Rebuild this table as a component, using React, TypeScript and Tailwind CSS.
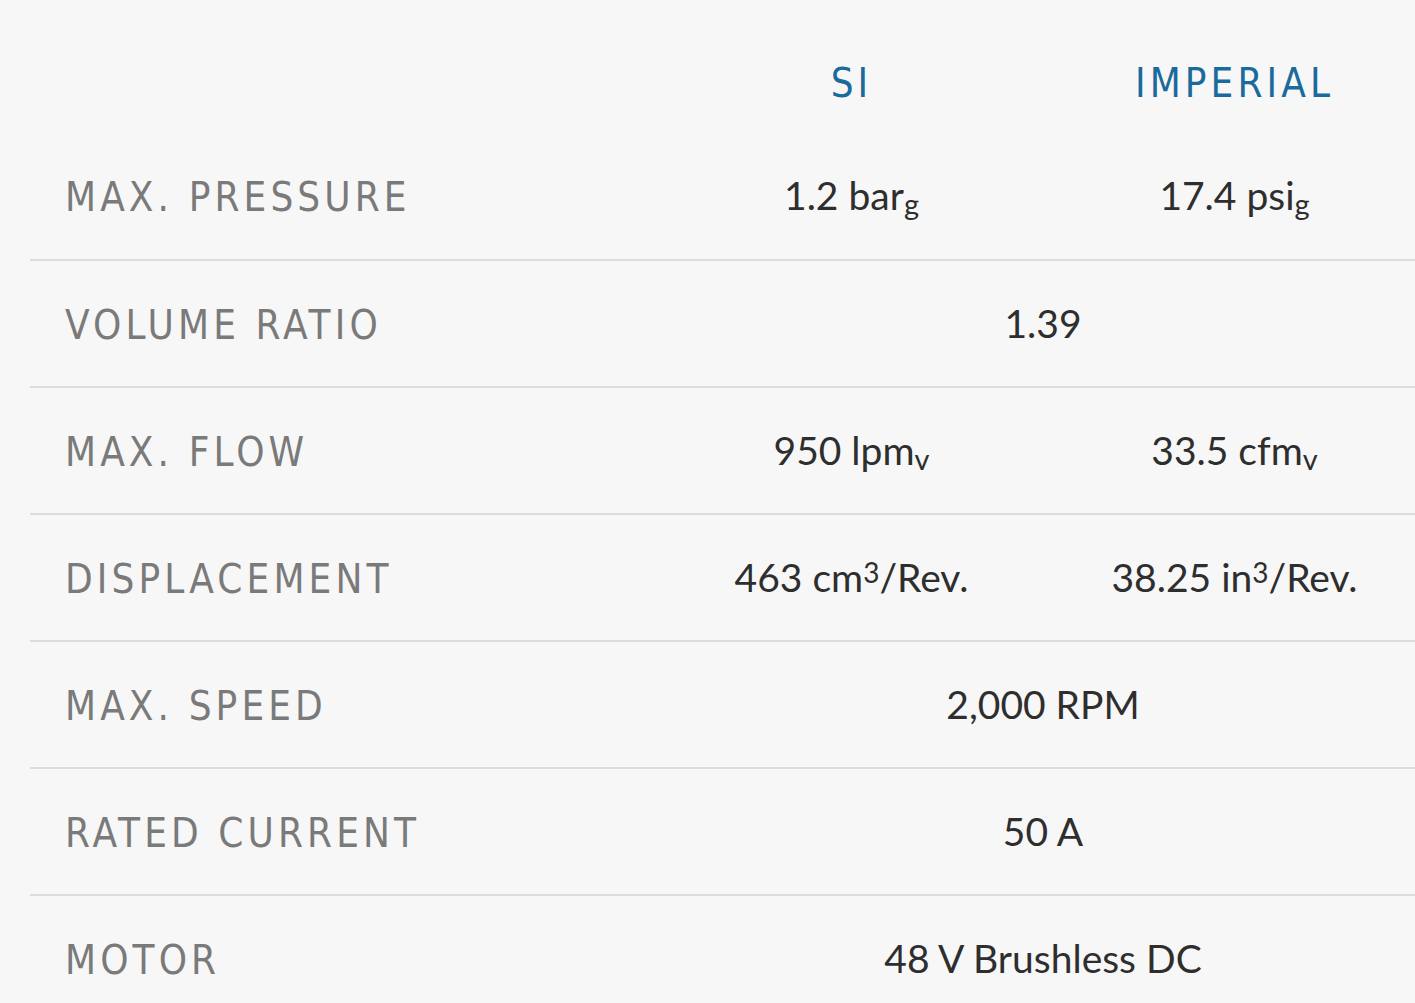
import React from 'react';

type Row = {
  label: string;
  si?: React.ReactNode;
  imperial?: React.ReactNode;
  both?: React.ReactNode;
};

// spans instead of <sub>/<sup> so the browser's sub/sup rules don't shrink the glyphs
const Sub = ({ children }: { children: React.ReactNode }) => (
  <span className="relative top-[5px] text-[29px] leading-[0]">{children}</span>
);

const Sup = ({ children }: { children: React.ReactNode }) => (
  <span className="relative -top-[9px] text-[28px] leading-[0]">{children}</span>
);

const rows: Row[] = [
  { label: 'MAX. PRESSURE', si: <>1.2 bar<Sub>g</Sub></>, imperial: <>17.4 psi<Sub>g</Sub></> },
  { label: 'VOLUME RATIO', both: '1.39' },
  { label: 'MAX. FLOW', si: <>950 lpm<Sub>v</Sub></>, imperial: <>33.5 cfm<Sub>v</Sub></> },
  { label: 'DISPLACEMENT', si: <>463 cm<Sup>3</Sup>/Rev.</>, imperial: <>38.25 in<Sup>3</Sup>/Rev.</> },
  { label: 'MAX. SPEED', both: '2,000 RPM' },
  { label: 'RATED CURRENT', both: '50 A' },
  { label: 'MOTOR', both: '48 V Brushless DC' },
];

const labelFont = "font-['DejaVu_Sans',sans-serif] [font-stretch:condensed] text-[40px] leading-[48px] tracking-[4.1px]";
const valueFont = "font-['Lato',sans-serif] text-center text-[39px] leading-[48px] pb-[5px] text-[#2e2e2e]";

export default function App() {
  return (
    <div className="w-full h-[1003px] overflow-hidden bg-[#f7f7f7]">
      <div className="ml-[30px] w-[1396px]">
        <div className="grid grid-cols-[630px_383px_383px] h-[132px] items-start pt-[59px]">
          <div />
          <div className={`${labelFont} text-center text-[#1a6a9c]`}>SI</div>
          <div className={`${labelFont} text-center text-[#1a6a9c]`}>IMPERIAL</div>
        </div>
        {rows.map((row, i) => (
          <div
            key={row.label}
            className={`grid grid-cols-[630px_383px_383px] h-[127px] items-center pt-[3px] ${i > 0 ? 'border-t-2 border-[#dcdcdc]' : ''}`}
          >
            <div className={`${labelFont} pl-[35px] text-[#7a7a7a]`}>{row.label}</div>
            {row.both ? (
              <div className={`${valueFont} col-span-2`}>{row.both}</div>
            ) : (
              <>
                <div className={valueFont}>{row.si}</div>
                <div className={valueFont}>{row.imperial}</div>
              </>
            )}
          </div>
        ))}
      </div>
    </div>
  );
}
